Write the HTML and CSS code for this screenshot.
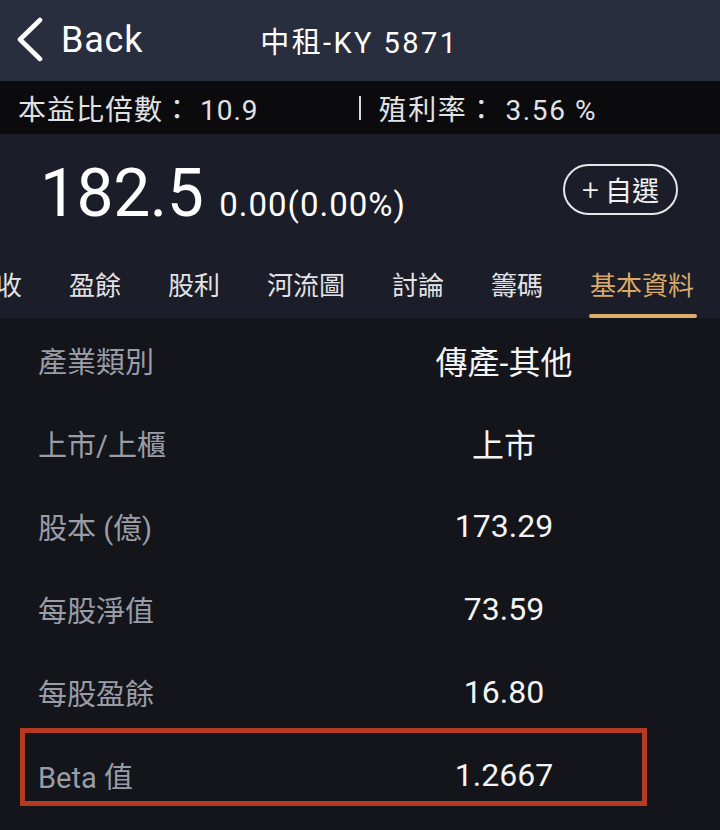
FILE: index.html
```html
<!DOCTYPE html>
<html lang="zh-Hant">
<head>
<meta charset="utf-8">
<link rel="stylesheet" href="styles.css">
</head>
<body>
<div class="app">
  <header class="nav">
    <div class="back">
      <svg class="chev" width="28" height="46" viewBox="0 0 28 46"><path d="M24 3 L4 22.5 L24 42" fill="none" stroke="#ffffff" stroke-width="4.6" stroke-linecap="round" stroke-linejoin="round"/></svg>
      <span class="back-text">Back</span>
    </div>
    <div class="title">中租-KY 5871</div>
  </header>
  <div class="stats">
    <span class="stat">本益比倍數：&nbsp;10.9</span>
    <span class="stat second"><span class="sep">|</span>殖利率：&nbsp;3.56 %</span>
  </div>
  <section class="quote">
    <div class="price-row">
      <div class="price">
        <span class="big">182.5</span>
        <span class="chg">0.00(0.00%)</span>
      </div>
      <button class="fav"><span class="plus">+</span>自選</button>
    </div>
    <nav class="tabs">
      <div class="track">
        <span class="tab">營收</span>
        <span class="tab">盈餘</span>
        <span class="tab">股利</span>
        <span class="tab">河流圖</span>
        <span class="tab">討論</span>
        <span class="tab">籌碼</span>
        <span class="tab active">基本資料</span>
      </div>
    </nav>
  </section>
  <main class="info">
    <div class="row"><span class="label">產業類別</span><span class="value">傳產-其他</span></div>
    <div class="row"><span class="label">上市/上櫃</span><span class="value">上市</span></div>
    <div class="row"><span class="label">股本 (億)</span><span class="value">173.29</span></div>
    <div class="row"><span class="label">每股淨值</span><span class="value">73.59</span></div>
    <div class="row"><span class="label">每股盈餘</span><span class="value">16.80</span></div>
    <div class="row highlight"><span class="label">Beta 值</span><span class="value">1.2667</span><span class="mark"></span></div>
  </main>
</div>
</body>
</html>
```
FILE: styles.css
```css
* { box-sizing: border-box; }
html, body { margin: 0; padding: 0; }
body {
  width: 720px;
  height: 830px;
  overflow: hidden;
  background: #13151b;
  font-family: "Roboto", "Noto Sans CJK TC", sans-serif;
  color: #f2f2f2;
}
.app { display: flex; flex-direction: column; height: 830px; }

.nav {
  height: 81px;
  background: #282e3d;
  display: flex;
  align-items: center;
  padding-left: 16px;
}
.back { display: flex; align-items: center; gap: 17px; margin-top: -2px; }
.chev { display: block; }
.back-text { font-size: 36px; color: #ffffff; letter-spacing: 0.8px; }
.title { margin-left: 117px; font-size: 29px; color: #ffffff; letter-spacing: 2.4px; margin-top: -2px; }

.stats {
  height: 53px;
  background: #0b0b0d;
  display: flex;
  align-items: center;
  padding-left: 18px;
  font-size: 28px;
  letter-spacing: 1px;
  color: #e2e2e4;
}
.stat { white-space: nowrap; display: flex; align-items: center; }
.stat.second { margin-left: 98px; letter-spacing: 1.6px; }
.sep {
  display: inline-block;
  width: 2px;
  height: 24px;
  background: #d8d8da;
  color: transparent;
  overflow: hidden;
  margin-right: 18px;
  margin-left: 2px;
  font-size: 1px;
}

.quote { background: #1b1d28; display: flex; flex-direction: column; }
.price-row {
  height: 111px;
  display: flex;
  align-items: center;
  justify-content: space-between;
  padding: 0 42px 0 40px;
}
.price { display: flex; align-items: baseline; gap: 16px; margin-top: 8px; }
.big { font-size: 66px; color: #ffffff; letter-spacing: -0.5px; }
.chg { font-size: 33px; color: #ffffff; letter-spacing: 1px; }
.fav {
  width: 115px;
  height: 51px;
  border: 2px solid #e6e6ea;
  border-radius: 26px;
  background: transparent;
  color: #f2f2f2;
  font-family: "Roboto", "Noto Sans CJK TC", sans-serif;
  font-size: 27px;
  padding: 0;
  display: flex;
  align-items: center;
  justify-content: center;
}
.plus { font-weight: 300; margin-right: 6px; font-size: 30px; }

.tabs { height: 73px; overflow: hidden; }
.track { display: flex; gap: 47px; margin-left: -30px; height: 100%; }
.tab {
  font-size: 26px;
  color: #e2e2e4;
  display: flex;
  align-items: center;
  height: 100%;
  padding-top: 3px;
  white-space: nowrap;
  position: relative;
}
.tab.active { color: #d9a96a; }
.tab.active::after {
  content: "";
  position: absolute;
  left: -1px; right: -3px; bottom: 0;
  height: 4px;
  border-radius: 2px;
  background: #dcae6e;
}

.info { display: flex; flex-direction: column; }
.row {
  height: 83px;
  display: grid;
  grid-template-columns: 300px 332px;
  align-items: center;
  padding-left: 38px;
  position: relative;
}
.label { font-size: 29px; color: #9a9da8; }
.value { font-size: 32px; color: #f4f4f4; text-align: center; }
.mark {
  position: absolute;
  left: 20px;
  top: -5px;
  width: 627px;
  height: 78px;
  border: 5px solid #b53a22;
}
```
